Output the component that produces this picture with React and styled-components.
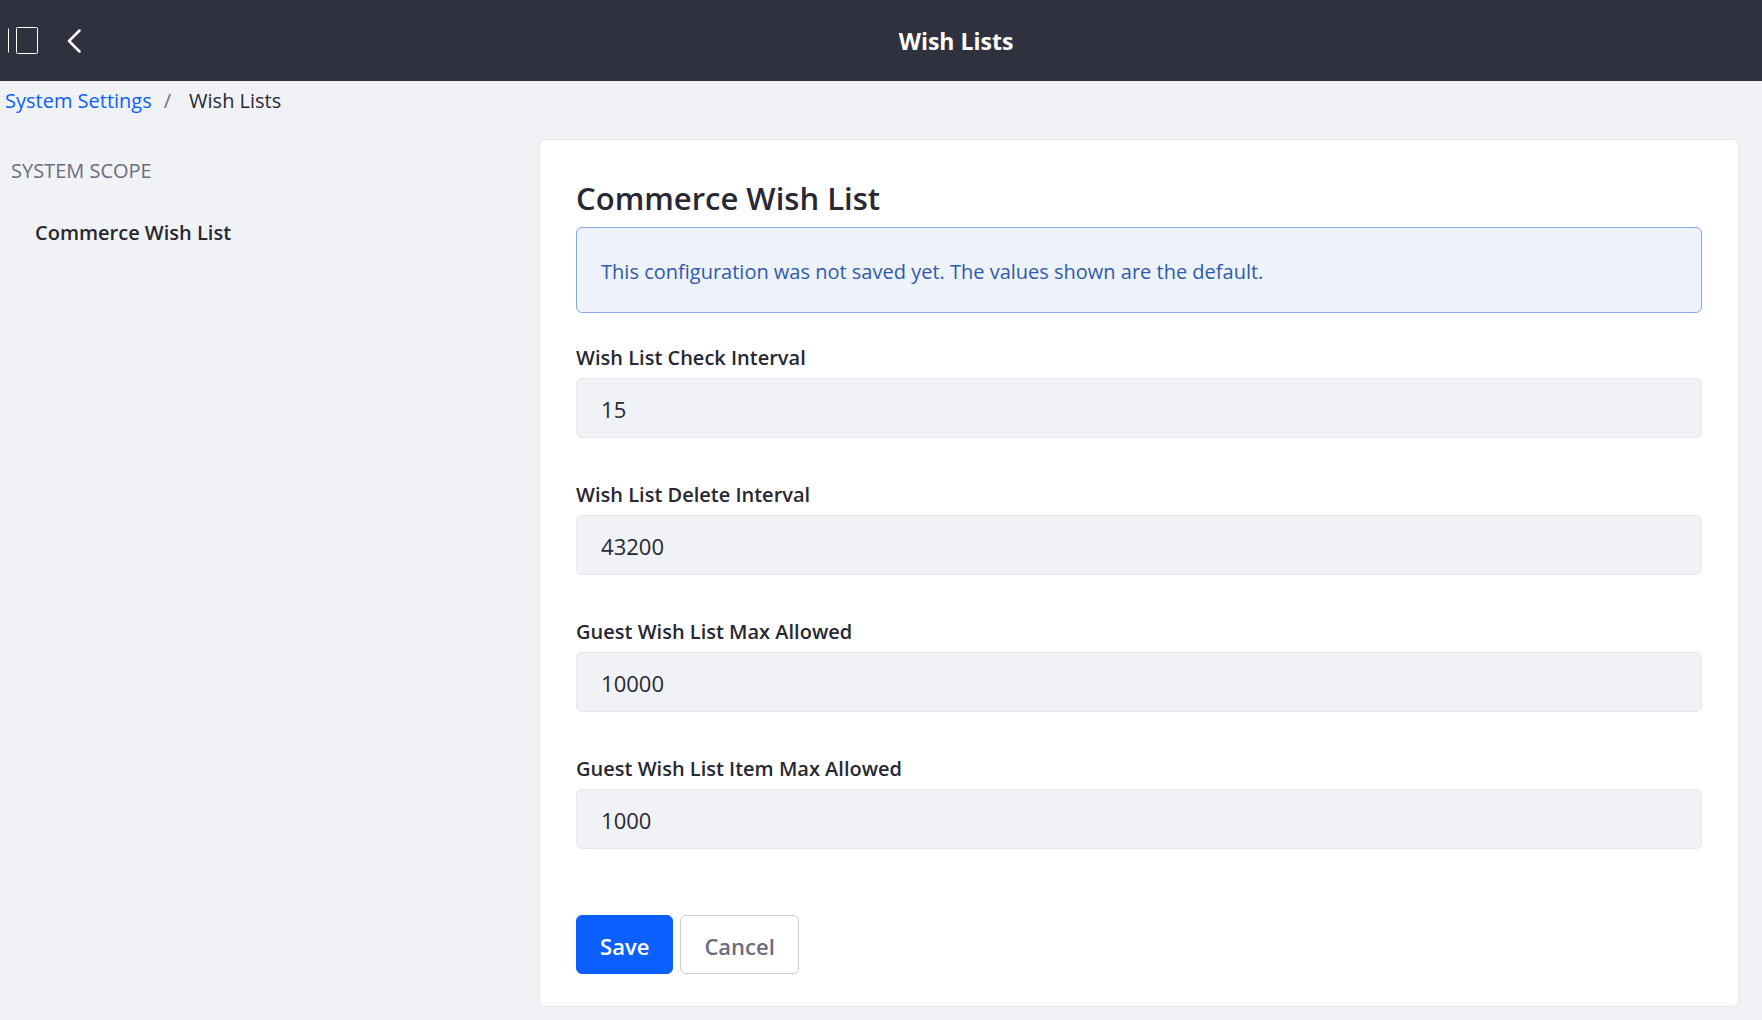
import React from "react";
import styled, { createGlobalStyle, css } from "styled-components";

const GlobalStyle = createGlobalStyle`
  *, *::before, *::after { box-sizing: border-box; }
  body {
    margin: 0;
    background: #f1f2f5;
    color: #272833;
    font-family: "Segoe UI", "Open Sans", "Noto Sans", sans-serif;
    font-size: 20px;
    line-height: 28px;
  }
`;

const Navbar = styled.header`
  display: flex;
  align-items: center;
  height: 81px;
  background: #30313f;
  color: #fff;
`;

const NavActions = styled.div`
  display: flex;
  flex: 0 0 150px;
  align-items: center;
  gap: 28px;
  padding-left: 8px;
`;

const IconButton = styled.button`
  display: flex;
  padding: 0;
  border: 0;
  background: none;
  color: inherit;
  cursor: pointer;
`;

const NavTitle = styled.h1`
  flex: 1;
  margin: 0;
  font-size: 23px;
  font-weight: 700;
  line-height: 28px;
  text-align: center;
`;

const Breadcrumb = styled.ol`
  display: flex;
  gap: 12px;
  margin: 0;
  padding: 6px 5px;
  list-style: none;
`;

const Crumb = styled.li`
  display: flex;
  gap: 18px;

  & + &::before {
    content: "/";
    color: #6b6c7e;
  }
`;

const CrumbLink = styled.a`
  color: #0b5fff;
  text-decoration: none;
`;

const Layout = styled.div`
  display: grid;
  grid-template-columns: 31fr 69fr;
  align-items: start;
  padding: 18px 23px 14px 0;
`;

const Sidebar = styled.nav`
  display: flex;
  flex-direction: column;
  gap: 34px;
  padding: 18px 11px;
`;

const SidebarHeading = styled.h2`
  margin: 0;
  color: #6b6c7e;
  font-size: 20px;
  font-weight: 400;
  line-height: 28px;
  text-transform: uppercase;
`;

const SidebarLink = styled.a`
  padding-left: 24px;
  color: #272833;
  font-weight: 600;
  text-decoration: none;
`;

const Sheet = styled.form`
  padding: 36px 36px 32px;
  border: 1px solid #e7e7ed;
  border-radius: 6px;
  background: #fff;
`;

const SheetTitle = styled.h2`
  margin: 0;
  padding: 2px 0 9px;
  font-size: 31px;
  font-weight: 600;
  line-height: 40px;
`;

const Alert = styled.p`
  margin: 0 0 31px;
  padding: 30px 24px 26px;
  border: 1px solid #89a7e0;
  border-radius: 6px;
  background: #eef2fa;
  color: #2e5aac;
`;

const Field = styled.div`
  display: flex;
  flex-direction: column;
  gap: 6px;
  margin-bottom: 43px;
`;

const Label = styled.label`
  font-weight: 600;
`;

const Input = styled.input`
  width: 100%;
  height: 60px;
  padding: 2px 24px 0;
  border: 1px solid #e7e7ed;
  border-radius: 6px;
  background: #f1f2f5;
  color: #272833;
  font-family: inherit;
  font-size: 22px;
`;

const Actions = styled.div`
  display: flex;
  gap: 7px;
  padding-top: 23px;
`;

const Button = styled.button`
  height: 59px;
  padding: 3px 23px 0;
  border: 1px solid #cdced9;
  border-radius: 6px;
  background: #fff;
  color: #6b6c7e;
  font-family: inherit;
  font-size: 22px;
  font-weight: 600;
  cursor: pointer;

  ${({ $primary }) =>
    $primary &&
    css`
      border-color: #0b5fff;
      background: #0b5fff;
      color: #fff;
    `}
`;

const fields = [
  { id: "check-interval", label: "Wish List Check Interval", value: "15" },
  { id: "delete-interval", label: "Wish List Delete Interval", value: "43200" },
  { id: "guest-max", label: "Guest Wish List Max Allowed", value: "10000" },
  { id: "guest-item-max", label: "Guest Wish List Item Max Allowed", value: "1000" },
];

export default function App() {
  return (
    <>
      <GlobalStyle />
      <Navbar>
        <NavActions>
          <IconButton type="button" aria-label="Toggle product menu">
            <svg width="30" height="28" viewBox="0 0 30 28" fill="none" stroke="currentColor">
              <path d="M0.5 1.500v24" />
              <rect x="8.5" y="0.5" width="21" height="26" rx="1" />
            </svg>
          </IconButton>
          <IconButton type="button" aria-label="Back">
            <svg width="16" height="24" viewBox="0 0 16 24" fill="none" stroke="currentColor" strokeWidth="2.5" strokeLinecap="round" strokeLinejoin="round">
              <path d="M13.500 1.500L3 12l10.500 10.500" />
            </svg>
          </IconButton>
        </NavActions>
        <NavTitle>Wish Lists</NavTitle>
      </Navbar>
      <nav aria-label="Breadcrumb">
        <Breadcrumb>
          <Crumb>
            <CrumbLink href="#system-settings">System Settings</CrumbLink>
          </Crumb>
          <Crumb aria-current="page">Wish Lists</Crumb>
        </Breadcrumb>
      </nav>
      <Layout>
        <Sidebar aria-label="Configuration scope">
          <SidebarHeading>System Scope</SidebarHeading>
          <SidebarLink href="#commerce-wish-list">Commerce Wish List</SidebarLink>
        </Sidebar>
        <Sheet onSubmit={(event) => event.preventDefault()}>
          <SheetTitle>Commerce Wish List</SheetTitle>
          <Alert>This configuration was not saved yet. The values shown are the default.</Alert>
          {fields.map(({ id, label, value }) => (
            <Field key={id}>
              <Label htmlFor={id}>{label}</Label>
              <Input id={id} type="text" defaultValue={value} />
            </Field>
          ))}
          <Actions>
            <Button type="submit" $primary>Save</Button>
            <Button type="button">Cancel</Button>
          </Actions>
        </Sheet>
      </Layout>
    </>
  );
}
